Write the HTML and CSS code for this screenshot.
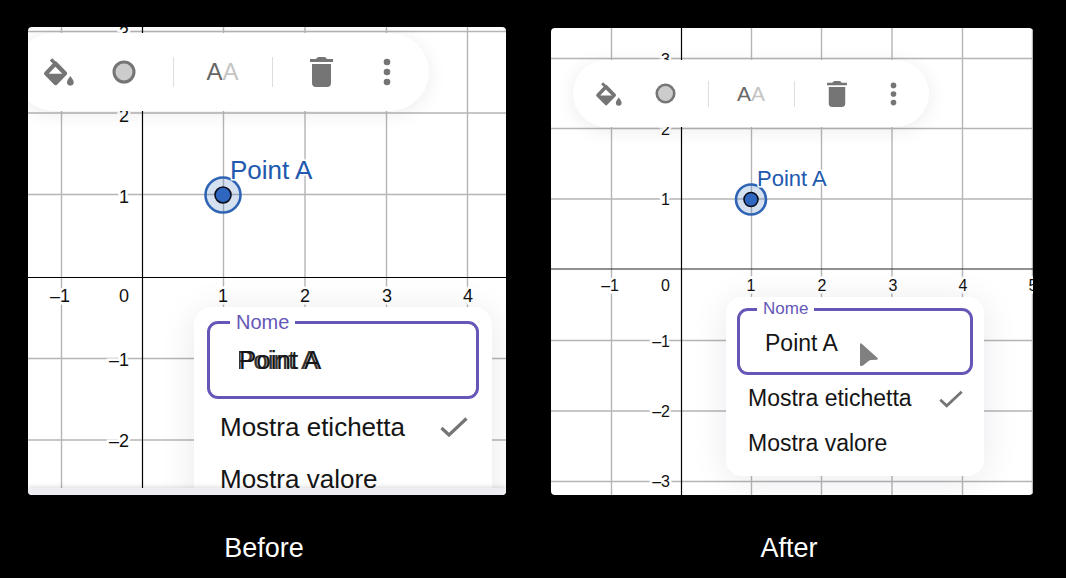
FILE: index.html
```html
<!DOCTYPE html>
<html lang="it">
<head>
<meta charset="utf-8">
<meta name="viewport" content="width=device-width, initial-scale=1">
<title>Before / After</title>
<link rel="stylesheet" href="styles.css">
</head>
<body>
<svg class="sprite" aria-hidden="true">
  <symbol id="bucket" viewBox="72 112 90 84">
    <path d="M93 116L110 133" fill="none" stroke="#757575" stroke-width="10"/>
    <path d="M103 123Q107 120 111 124L140 154Q143 158 140 162L111 192Q107 196 103 192L74 163Q70 159 74 154ZM106 138L86 159H127Z" fill="#757575" fill-rule="evenodd"/>
    <path d="M151 166C157 174 161 180 161 185A10 10 0 0 1 141 185C141 180 145 174 151 166Z" fill="#757575"/>
  </symbol>
  <symbol id="dot" viewBox="0 0 24 24">
    <circle cx="12" cy="12" r="10" fill="#ccc" stroke="#757575" stroke-width="3"/>
  </symbol>
  <symbol id="trash" viewBox="0 0 23 30">
    <path d="M0 2H6Q7 0 9 0H14Q16 0 17 2H23V5H0ZM2 7H21V26Q21 30 17 30H6Q2 30 2 26Z" fill="#757575"/>
  </symbol>
  <symbol id="more" viewBox="0 0 8 28">
    <g fill="#757575"><circle cx="4" cy="4" r="3.3"/><circle cx="4" cy="14" r="3.3"/><circle cx="4" cy="24" r="3.3"/></g>
  </symbol>
  <symbol id="check" viewBox="0 0 28 20">
    <path d="M1.500 11L9 18L26.500 1.500" fill="none" stroke="#757575" stroke-width="3.200"/>
  </symbol>
</svg>
<main class="compare">
  <figure class="panel">
    <div class="stage before">
      <svg class="graph" viewBox="0 0 478 468" preserveAspectRatio="xMinYMin slice">
        <path class="grid" d="M33.500 0V468M195.500 0V468M277 0V468M358.500 0V468M439.500 0V468M0 4.500H478M0 86H478M0 167.500H478M0 331.500H478M0 413H478"/>
        <path class="axis" d="M114.500 0V468M0 250.500H478"/>
        <g class="num end">
          <text x="101" y="12">3</text><text x="101" y="95">2</text><text x="101" y="176">1</text>
          <text x="101" y="339">–1</text><text x="101" y="420">–2</text><text x="101" y="275">0</text><text x="42" y="275">–1</text>
        </g>
        <g class="num">
          <text x="195" y="275">1</text><text x="277" y="275">2</text><text x="359" y="275">3</text><text x="440" y="275">4</text>
        </g>
        <circle class="halo" cx="195" cy="168" r="17.500"/>
        <circle class="core" cx="195" cy="168" r="8"/>
        <text class="name" x="202" y="152">Point A</text>
      </svg>
      <div class="toolbar" role="toolbar">
        <button type="button" aria-label="Colore"><svg class="i-bucket"><use href="#bucket"/></svg></button>
        <button type="button" aria-label="Stile punto"><svg class="i-dot"><use href="#dot"/></svg></button>
        <span class="rule"></span>
        <button type="button" class="aa">A<span>A</span></button>
        <span class="rule"></span>
        <button type="button" aria-label="Elimina"><svg class="i-trash"><use href="#trash"/></svg></button>
        <button type="button" aria-label="Altro"><svg class="i-more"><use href="#more"/></svg></button>
      </div>
      <form class="menu">
        <fieldset class="field">
          <legend><label for="name-before">Nome</label></legend>
          <input id="name-before" class="doubled" type="text" value="Point A">
        </fieldset>
        <label class="row">Mostra etichetta<input type="checkbox" checked><svg><use href="#check"/></svg></label>
        <label class="row">Mostra valore<input type="checkbox"><svg><use href="#check"/></svg></label>
      </form>
      <div class="strip"></div>
    </div>
    <figcaption>Before</figcaption>
  </figure>
  <figure class="panel">
    <div class="stage after">
      <svg class="graph" viewBox="0 0 482 467" preserveAspectRatio="xMinYMin slice">
        <path class="grid" d="M60.500 0V467M200.500 0V467M270.500 0V467M341 0V467M411.500 0V467M481.500 0V467M0 30.500H482M0 100.500H482M0 171H482M0 312.500H482M0 383H482M0 453.500H482"/>
        <path class="axis soft" d="M0 241H482"/>
        <path class="axis" d="M130.500 0V467"/>
        <g class="num end">
          <text x="119" y="37">3</text><text x="119" y="107">2</text><text x="119" y="177">1</text>
          <text x="119" y="319">–1</text><text x="119" y="389">–2</text><text x="119" y="459">–3</text><text x="119" y="263">0</text><text x="68" y="263">–1</text>
        </g>
        <g class="num">
          <text x="200" y="263">1</text><text x="271" y="263">2</text><text x="342" y="263">3</text><text x="412" y="263">4</text><text x="482" y="263">5</text>
        </g>
        <circle class="halo" cx="200" cy="171.500" r="15"/>
        <circle class="core" cx="200" cy="171.500" r="7"/>
        <text class="name" x="206" y="158">Point A</text>
      </svg>
      <div class="toolbar" role="toolbar">
        <button type="button" aria-label="Colore"><svg class="i-bucket"><use href="#bucket"/></svg></button>
        <button type="button" aria-label="Stile punto"><svg class="i-dot"><use href="#dot"/></svg></button>
        <span class="rule"></span>
        <button type="button" class="aa">A<span>A</span></button>
        <span class="rule"></span>
        <button type="button" aria-label="Elimina"><svg class="i-trash"><use href="#trash"/></svg></button>
        <button type="button" aria-label="Altro"><svg class="i-more"><use href="#more"/></svg></button>
      </div>
      <form class="menu">
        <fieldset class="field">
          <legend><label for="name-after">Nome</label></legend>
          <input id="name-after" type="text" value="Point A">
        </fieldset>
        <label class="row">Mostra etichetta<input type="checkbox" checked><svg><use href="#check"/></svg></label>
        <label class="row">Mostra valore<input type="checkbox"><svg><use href="#check"/></svg></label>
        <svg class="pointer" viewBox="0 0 18 23" aria-hidden="true"><path d="M0 1.500Q0 -0.500 2 1L17 14.500Q19 16.500 16.500 16.800L11 17Q9 17 8 18.500L3 22.500Q0 24 0 21.500Z" fill="#808080"/></svg>
      </form>
    </div>
    <figcaption>After</figcaption>
  </figure>
</main>
</body>
</html>
```
FILE: styles.css
```css
* { box-sizing: border-box; }

body {
  margin: 0;
  background: #000;
  color: #151515;
  font-family: "Liberation Sans", Arial, sans-serif;
}

.sprite { position: absolute; width: 0; height: 0; }

.compare {
  display: grid;
  grid-template-columns: 478fr 482fr;
  column-gap: 45px;
  align-items: end;
  padding: 27px 33px 0 28px;
}

.panel { margin: 0; min-width: 0; }

figcaption {
  padding: 37px 6px 14px 0;
  color: #fff;
  font-size: 27px;
  line-height: 32px;
  text-align: center;
}

.stage {
  position: relative;
  display: flex;
  flex-direction: column;
  align-items: flex-start;
  overflow: hidden;
  border-radius: 4px;
  background: #fff;
}

.before {
  --num: 18px;
  --name: 26px;
  --text: 26px;
  --value: 26px;
  --small: 20px;
  --icon: 30px;
  --button: 65px;
  --row: 52px;
  aspect-ratio: 478 / 468;
}

.after {
  --num: 16px;
  --name: 22px;
  --text: 23px;
  --value: 23px;
  --small: 17px;
  --icon: 26px;
  --button: 56px;
  --row: 45px;
  aspect-ratio: 482 / 467;
}

/* Coordinate plane */
.graph { position: absolute; inset: 0; width: 100%; height: 100%; }
.grid { stroke: #b5b5b5; stroke-width: 1.4; fill: none; }
.axis { stroke: #000; stroke-width: 1.2; fill: none; }
.soft { stroke: #222; }
.num {
  font-size: var(--num);
  text-anchor: middle;
  fill: #111;
  stroke: #fff;
  stroke-width: 5px;
  paint-order: stroke;
}
.end { text-anchor: end; }
.halo { fill: #2f64b5; fill-opacity: .2; stroke: #2f64b5; stroke-width: 2.6; }
.core { fill: #2f66c0; stroke: #0a0f1c; stroke-width: 1.6; }
.name {
  font-size: var(--name);
  fill: #2159ae;
  stroke: #fff;
  stroke-width: 3px;
  paint-order: stroke;
}

/* Floating toolbar */
.toolbar {
  position: relative;
  display: flex;
  align-items: center;
  flex: none;
  border-radius: 40px;
  background: #fff;
  box-shadow: 0 3px 20px rgba(0, 0, 0, .08);
}
.before .toolbar { height: 78px; margin: 6px 0 0 -13px; padding: 0 10px 0 11px; }
.after .toolbar { height: 67px; margin: 32px 0 0 22px; padding: 0 8px; }

.toolbar button {
  display: flex;
  align-items: center;
  justify-content: center;
  width: var(--button);
  height: var(--button);
  padding: 0;
  border: 0;
  background: none;
  color: #666;
  font: var(--name) "Liberation Sans", Arial, sans-serif;
}
.before .aa { font-size: 24px; }
.after .aa { font-size: 21px; }
.aa span { color: #c4c4c4; }

.rule { width: 1px; height: var(--icon); background: #dedede; }
.before .rule { margin: 0 16px 0 17px; }
.after .rule { margin: 0 14px 0 15px; }

.i-bucket { width: var(--icon); height: 28px; }
.i-dot { width: 24px; height: 24px; }
.i-trash { width: 23px; height: 30px; }
.i-more { width: 8px; height: 28px; }
.after .i-bucket { height: 24px; }
.after .i-dot { width: 21px; height: 21px; }
.after .i-trash { width: 20px; height: 26px; }
.after .i-more { width: 7px; height: 24px; }

/* Context menu */
.menu {
  position: relative;
  flex: none;
  background: #fff;
  box-shadow: 0 4px 36px rgba(20, 20, 60, .09);
}
.before .menu { width: 298px; margin: 196px 0 0 166px; padding: 5px 13px 10px; border-radius: 18px; }
.after .menu { width: 258px; margin: 170px 0 0 175px; padding: 3px 11px 10px; border-radius: 16px; }

.field {
  min-width: 0;
  margin: 0;
  border: 3px solid #6557b8;
  border-radius: 11px;
}
.before .field { padding: 0 20px 7px; margin-bottom: 2px; }
.after .field { padding: 0 17px 3px; margin-bottom: 1px; }

.field legend {
  padding: 0 6px;
  color: #6557b8;
  font-size: var(--small);
  line-height: 18px;
}

.field input {
  display: block;
  width: 100%;
  height: 58px;
  padding: 0 9px;
  border: 0;
  outline: 0;
  background: none;
  color: #151515;
  font: var(--value) "Liberation Sans", Arial, sans-serif;
}
.before .menu { padding-top: 6px; }
.after .field input { height: 51px; padding: 0 8px; }
.field .doubled { text-shadow: -3px 0 #333; }

.row {
  display: flex;
  align-items: center;
  justify-content: space-between;
  height: var(--row);
  padding: 0 11px 0 13px;
  font-size: var(--text);
  white-space: nowrap;
}
.after .row { padding: 0 10px 0 11px; }
.row input { position: absolute; appearance: none; margin: 0; opacity: 0; }
.row svg { width: 28px; height: 20px; }
.after .row svg { width: 24px; height: 18px; }
.row input:not(:checked) + svg { visibility: hidden; }

.pointer { position: absolute; left: 134px; top: 46px; width: 18px; height: 23px; }

.strip {
  position: absolute;
  inset: auto 0 0;
  height: 7px;
  background: #eeeef2;
  box-shadow: 0 -1px 5px rgba(0, 0, 0, .15);
}
```
